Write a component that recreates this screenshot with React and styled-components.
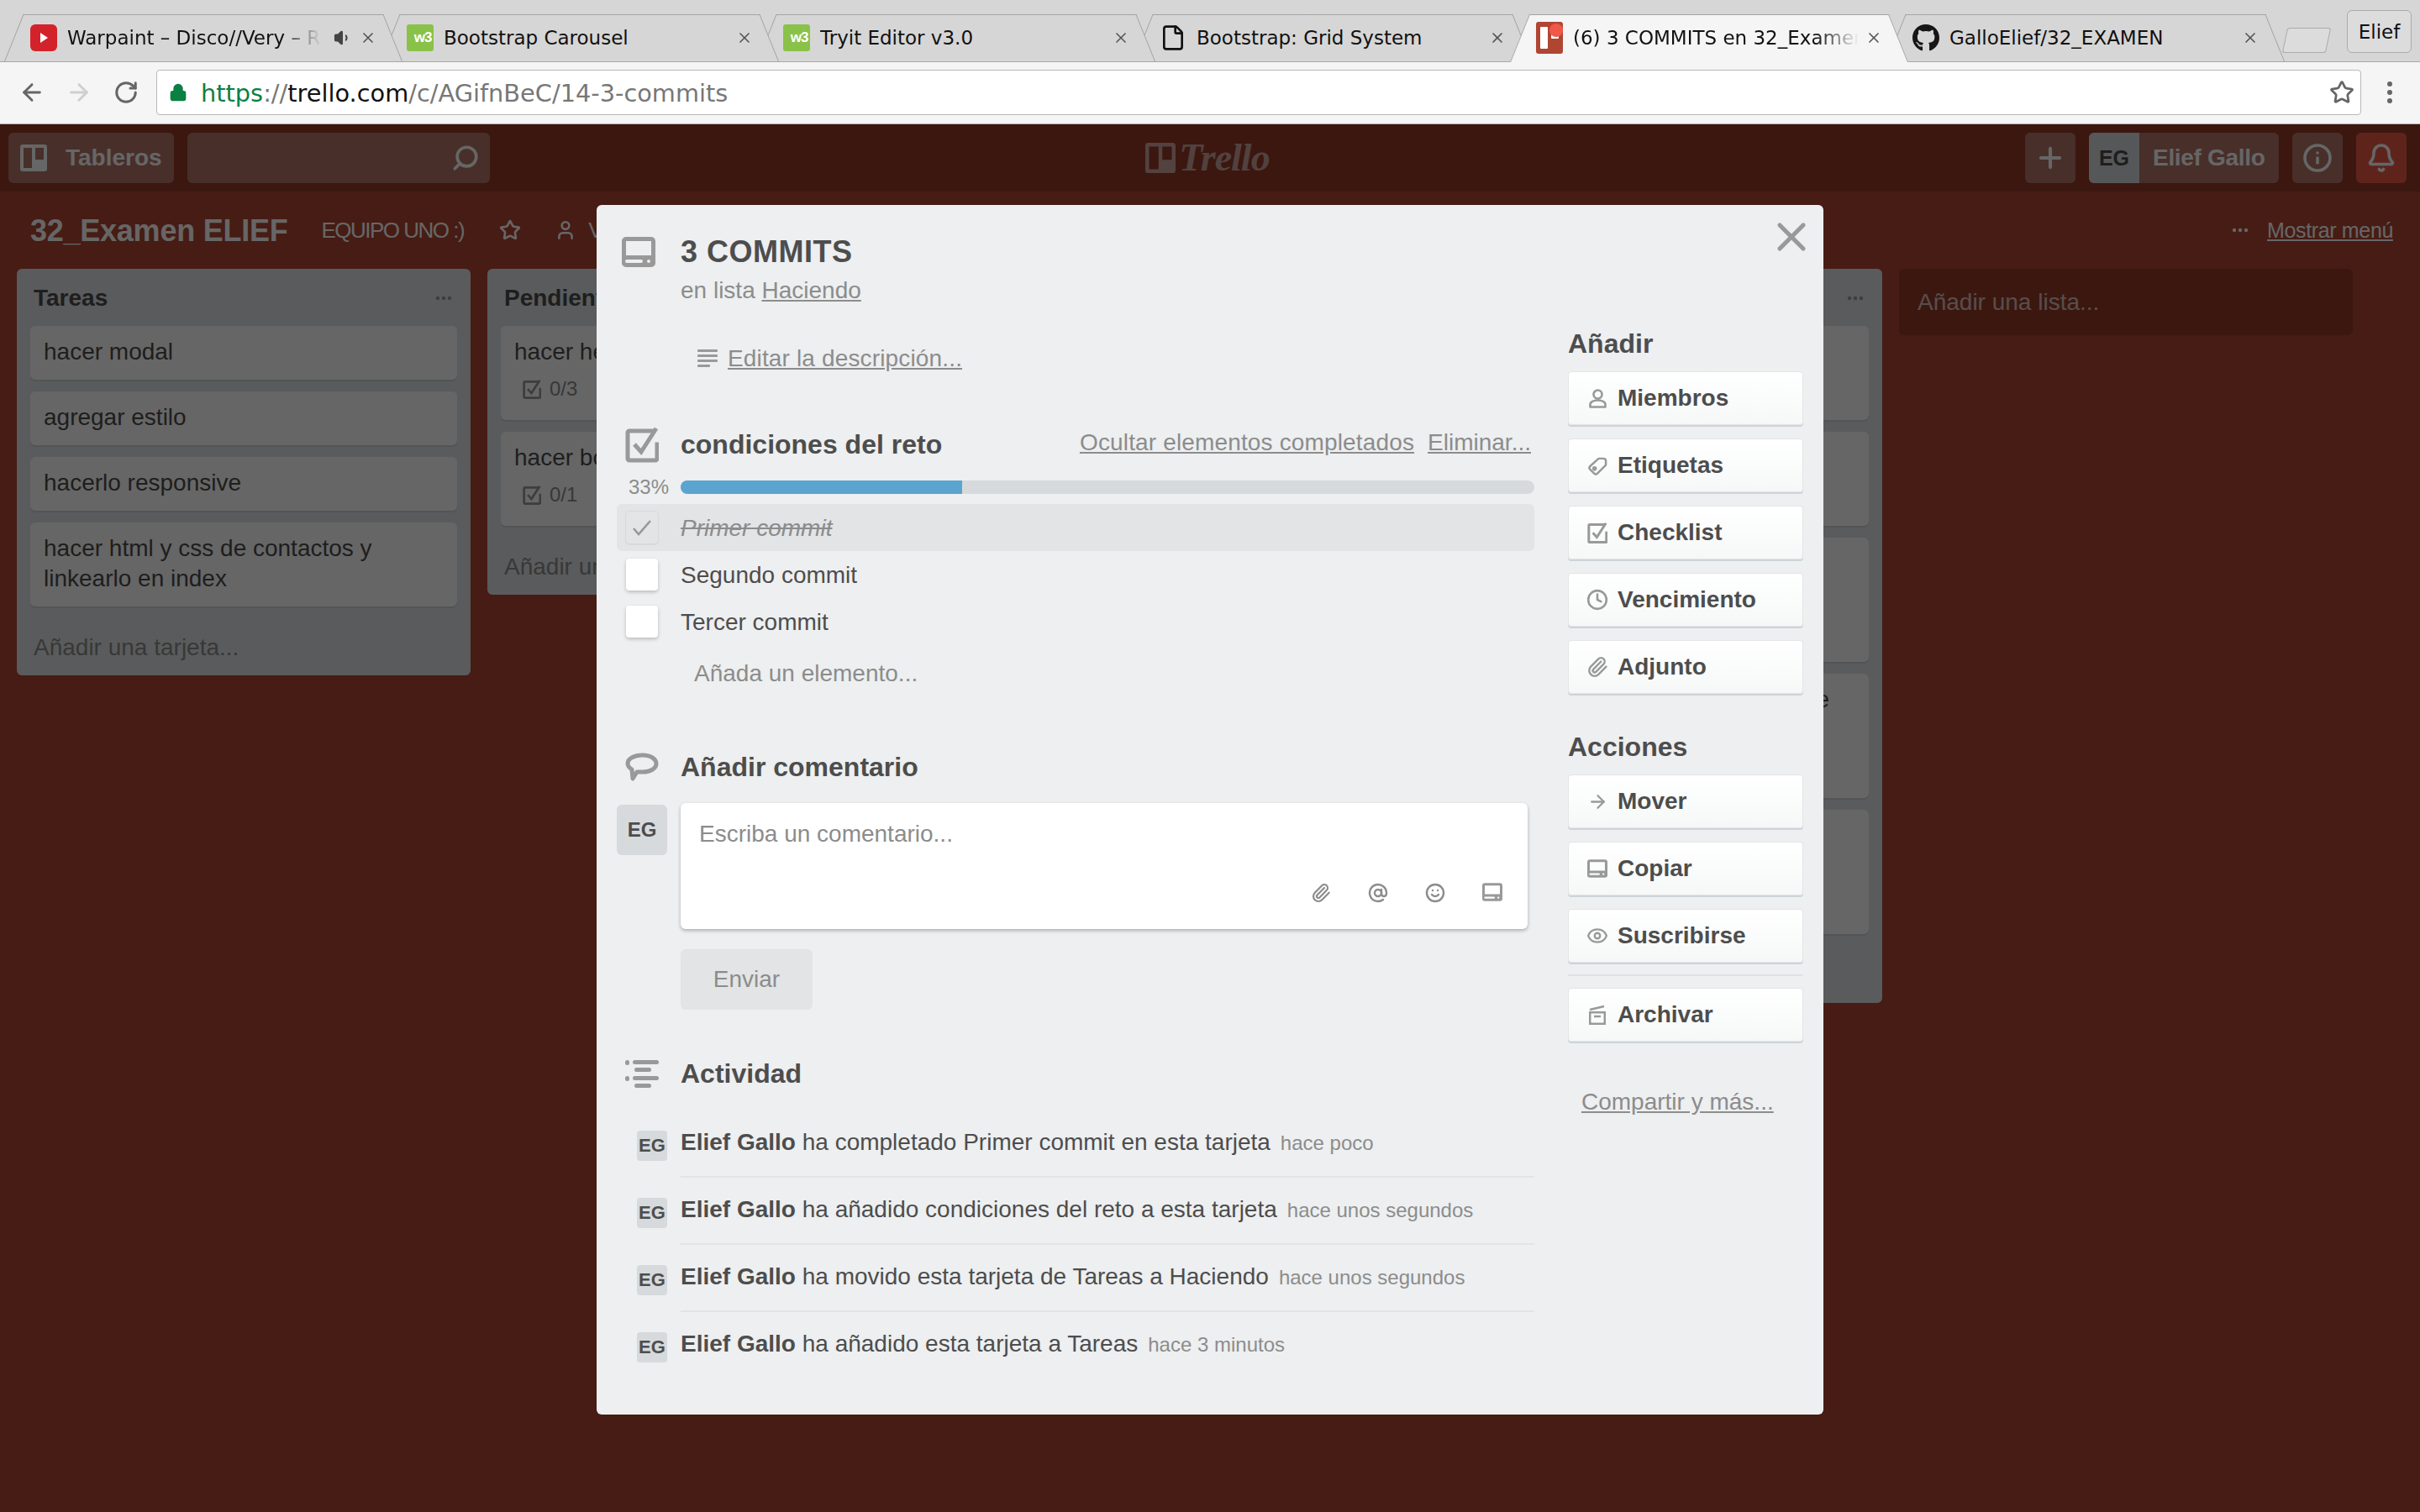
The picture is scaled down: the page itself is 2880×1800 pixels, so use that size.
import React from "react";
import styled, { createGlobalStyle } from "styled-components";
import { ArrowLeft, ArrowRight, RotateCw, Lock, Star, Plus, Info, Bell, Search, Paperclip, AtSign, Smile, Clock, Eye, File, Volume1, MoreHorizontal, X, User } from "lucide-react";
import { FaGithub } from "react-icons/fa";

const Global = createGlobalStyle`
  html, body { margin: 0; padding: 0; width: 2880px; height: 1800px; overflow: hidden; background: #471b14; }
  * { box-sizing: border-box; }
  body { font-family: "Liberation Sans", Arial, sans-serif; }
`;

const Page = styled.div`
  width: 2880px;
  height: 1800px;
  display: flex;
  flex-direction: column;
`;

/* ---------- browser chrome ---------- */
const TabStrip = styled.div`
  position: relative;
  height: 74px;
  flex: none;
  padding: 17px 0 0 31px;
  display: flex;
  align-items: flex-start;
  background: #d6d6d6;
  box-shadow: inset 0 -1px 0 #a8a8a8;
  font-family: "DejaVu Sans", sans-serif;
`;
const Tab = styled.div`
  position: relative;
  flex: none;
  width: 474px;
  height: ${(p) => (p.$active ? 57 : 56)}px;
  margin-left: -26px;
  display: flex;
  align-items: center;
  padding: 0 0 1px 31px;
  z-index: ${(p) => p.$z};
  &::before, &::after {
    content: "";
    position: absolute;
    top: 0;
    bottom: 0;
    width: 50%;
    background: ${(p) => (p.$active ? "#f5f5f5" : "#d6d6d6")};
    border-top: 1px solid #a3a3a3;
    z-index: -1;
  }
  &::before {
    left: 0;
    border-left: 1px solid #a3a3a3;
    transform-origin: bottom left;
    transform: skewX(-22deg);
  }
  &::after {
    right: 0;
    border-right: 1px solid #a3a3a3;
    transform-origin: bottom right;
    transform: skewX(22deg);
  }
`;
const Favicon = styled.span`
  flex: none;
  width: 32px;
  height: 32px;
  display: flex;
  align-items: center;
  justify-content: center;
`;
const TabTitle = styled.span`
  flex: none;
  width: ${(p) => p.$w}px;
  margin-left: 12px;
  font-size: 23px;
  color: #111;
  white-space: nowrap;
  overflow: hidden;
  ${(p) => p.$fade && "mask-image: linear-gradient(to right, #000 85%, transparent 100%);"}
`;
const TabClose = styled.span`
  position: absolute;
  left: 423px;
  top: 16px;
  width: 20px;
  height: 24px;
  display: flex;
  align-items: center;
  justify-content: center;
  color: #555;
`;
const Speaker = styled.span`
  position: absolute;
  left: 392px;
  top: 17px;
  display: flex;
  color: #444;
`;
const NewTab = styled.span`
  position: relative;
  flex: none;
  width: 52px;
  height: 30px;
  margin: 16px 0 0 0;
  background: #dcdcdc;
  border: 1px solid #ababab;
  border-radius: 3px;
  transform: skewX(-12deg);
`;
const ProfileButton = styled.span`
  position: absolute;
  right: 10px;
  top: 12px;
  width: 77px;
  height: 51px;
  display: flex;
  align-items: center;
  justify-content: center;
  background: #dcdcdc;
  border: 1px solid #ababab;
  border-radius: 6px;
  font-size: 23px;
  color: #111;
`;
const Toolbar = styled.div`
  height: 74px;
  flex: none;
  display: flex;
  align-items: center;
  padding: 0 0 2px 18px;
  background: #f5f5f5;
  border-bottom: 1px solid #b4b4b4;
`;
const NavButton = styled.span`
  flex: none;
  width: 40px;
  margin-right: ${(p) => p.$gap}px;
  display: flex;
  justify-content: center;
  color: ${(p) => (p.$off ? "#cfcfcf" : "#666")};
`;
const AddressBar = styled.div`
  flex: none;
  width: 2624px;
  height: 54px;
  display: flex;
  align-items: center;
  padding: 0 7px 0 14px;
  background: #fff;
  border: 1px solid #b9b9b9;
  border-radius: 4px;
  font-family: "DejaVu Sans", sans-serif;
  font-size: 28.8px;
  color: #777;
`;
const UrlText = styled.span`
  margin-left: 16px;
  padding-top: 2px;
  flex: 1;
  white-space: nowrap;
`;
const UrlGreen = styled.span` color: #0b8043; `;
const UrlDark = styled.span` color: #111; `;
const MenuDots = styled.span`
  flex: none;
  width: 6px;
  margin-left: 31px;
  display: flex;
  flex-direction: column;
  gap: 4px;
  & > i { display: block; width: 6px; height: 6px; border-radius: 50%; background: #666; }
`;

/* ---------- trello page ---------- */
const Viewport = styled.div`
  position: relative;
  flex: 1;
  background: #b04632;
  overflow: hidden;
`;
const HeaderBar = styled.header`
  height: 80px;
  display: grid;
  grid-template-columns: 1fr auto 1fr;
  align-items: center;
  padding: 0 16px 0 10px;
  background: rgba(0, 0, 0, 0.15);
`;
const HeaderSide = styled.div`
  display: flex;
  align-items: center;
  gap: 16px;
  justify-content: ${(p) => (p.$end ? "flex-end" : "flex-start")};
`;
const HeaderButton = styled.div`
  height: 60px;
  width: ${(p) => (p.$w ? p.$w + "px" : "auto")};
  display: flex;
  align-items: center;
  justify-content: ${(p) => p.$justify || "center"};
  gap: 22px;
  padding: ${(p) => p.$pad || "0"};
  border-radius: 6px;
  overflow: hidden;
  color: #fff;
  font-weight: 700;
  font-size: 28px;
  background: ${(p) => p.$bg || "rgba(255,255,255,.3)"};
`;
const HeaderAvatar = styled.span`
  flex: none;
  width: 60px;
  height: 60px;
  display: flex;
  align-items: center;
  justify-content: center;
  background: #d6dadc;
  color: #4d4d4d;
  font-size: 25px;
`;
const UserName = styled.span`
  margin-left: -6px;
  white-space: nowrap;
  letter-spacing: -0.3px;
`;
const Logo = styled.div`
  display: flex;
  align-items: center;
  gap: 4px;
  color: rgba(255, 255, 255, 0.55);
  font-family: "Liberation Serif", serif;
  font-style: italic;
  font-weight: 700;
  font-size: 46px;
  line-height: 1;
  letter-spacing: -1px;
`;
const BoardBar = styled.div`
  height: 92px;
  display: flex;
  align-items: center;
  padding: 0 32px 0 36px;
  color: #fff;
`;
const BoardTitle = styled.h1`
  margin: 0;
  padding-top: 2px;
  font-size: 36px;
  font-weight: 700;
  line-height: 44px;
  letter-spacing: -0.25px;
`;
const TeamName = styled.span`
  margin-left: 40px;
  font-size: 26px;
  letter-spacing: -1.5px;
  white-space: nowrap;
`;
const BoardIcon = styled.span`
  display: flex;
  margin-left: ${(p) => p.$m}px;
`;
const BoardVisibility = styled.span`
  margin-left: 14px;
  font-size: 26px;
  white-space: nowrap;
`;
const BoardMenu = styled.div`
  margin-left: auto;
  display: flex;
  align-items: center;
  gap: 20px;
  font-size: 25px;
  letter-spacing: -0.35px;
`;
const Under = styled.span`
  text-decoration: underline;
  letter-spacing: ${(p) => p.$spacing || "inherit"};
`;
const Lists = styled.div`
  display: flex;
  align-items: flex-start;
  gap: 20px;
  padding-left: 20px;
`;
const List = styled.section`
  flex: none;
  width: 540px;
  border-radius: 6px;
  background: #e2e4e6;
  padding: 0 16px;
  color: #4d4d4d;
`;
const ListHead = styled.div`
  height: 68px;
  display: flex;
  align-items: center;
  justify-content: space-between;
  padding: 2px 4px 0;
  font-size: 28px;
  font-weight: 700;
  white-space: nowrap;
  overflow: hidden;
  color: #4d4d4d;
`;
const ListDots = styled.span` display: flex; color: #999; `;
const Cards = styled.div`
  display: flex;
  flex-direction: column;
  gap: 14px;
`;
const Card = styled.div`
  background: #fff;
  border-radius: 6px;
  padding: 13px 16px 15px;
  font-size: 28px;
  line-height: 36px;
  color: #4d4d4d;
  box-shadow: 0 2px 0 #ccd2d5;
`;
const Badge = styled.div`
  display: flex;
  align-items: center;
  gap: 10px;
  height: 40px;
  margin: 6px 0 2px 10px;
  font-size: 24px;
  color: #8c8c8c;
`;
const AddCard = styled.div`
  height: 68px;
  margin-top: 14px;
  padding: 2px 4px 0;
  display: flex;
  align-items: center;
  white-space: nowrap;
  overflow: hidden;
  font-size: 28px;
  color: #8c8c8c;
`;
const AddList = styled.div`
  flex: none;
  width: 540px;
  height: 79px;
  display: flex;
  align-items: center;
  padding: 1px 0 0 22px;
  border-radius: 6px;
  background: rgba(0, 0, 0, 0.15);
  color: rgba(255, 255, 255, 0.7);
  font-size: 28px;
`;

/* ---------- modal ---------- */
const Overlay = styled.div`
  position: absolute;
  inset: 0;
  display: flex;
  justify-content: center;
  align-items: flex-start;
  padding-top: 96px;
  background: rgba(0, 0, 0, 0.6);
`;
const Modal = styled.div`
  position: relative;
  width: 1460px;
  padding: 0 24px 42px;
  border-radius: 6px;
  background: #edeff0;
  color: #4d4d4d;
  font-size: 28px;
`;
const CloseButton = styled.span`
  position: absolute;
  top: 10px;
  right: 10px;
  display: flex;
  color: #999;
`;
const ModalHead = styled.div`
  display: grid;
  grid-template-columns: 76px 1fr;
  padding-top: 34px;
`;
const Gutter = styled.span`
  display: flex;
  justify-content: ${(p) => p.$justify || "flex-start"};
  align-items: center;
  padding-left: ${(p) => p.$pad ?? 10}px;
`;
const ModalTitle = styled.h2`
  margin: 0;
  font-size: 36px;
  line-height: 44px;
  font-weight: 700;
  letter-spacing: 0.5px;
  color: #4d4d4d;
`;
const Subtitle = styled.div`
  grid-column: 2;
  margin-top: 6px;
  line-height: 36px;
  color: #8c8c8c;
`;
const Columns = styled.div`
  display: grid;
  grid-template-columns: 1092px 280px;
  column-gap: 40px;
  margin-top: 20px;
`;
const Main = styled.div`
  display: flex;
  flex-direction: column;
  min-width: 0;
`;
const DescLink = styled.div`
  margin: 25px 0 0 96px;
  display: flex;
  align-items: center;
  gap: 12px;
  line-height: 36px;
  letter-spacing: 0.15px;
  color: #8c8c8c;
`;
const SectionHead = styled.div`
  display: grid;
  grid-template-columns: 76px 1fr auto;
  align-items: center;
  height: 44px;
  margin-top: ${(p) => p.$top}px;
`;
const SectionTitle = styled.h3`
  margin: 0;
  font-size: 32px;
  line-height: 44px;
  font-weight: 700;
  color: #4d4d4d;
`;
const SectionLinks = styled.div`
  display: flex;
  gap: 16px;
  padding: 0 4px 4px 0;
  color: #8c8c8c;
`;
const ProgressRow = styled.div`
  display: flex;
  align-items: center;
  height: 16px;
  margin-top: 21px;
`;
const Percent = styled.span`
  flex: none;
  width: 76px;
  text-align: center;
  font-size: 24px;
  color: #8c8c8c;
`;
const Track = styled.div`
  flex: 1;
  height: 16px;
  border-radius: 8px;
  overflow: hidden;
  background: #d6dadc;
`;
const Fill = styled.div`
  height: 100%;
  background: #5ba4cf;
`;
const CheckRows = styled.div`
  margin-top: 12px;
`;
const CheckRow = styled.div`
  height: 56px;
  display: flex;
  align-items: center;
  padding-left: 11px;
  gap: 27px;
  border-radius: 6px;
  background: ${(p) => (p.$done ? "#e2e4e6" : "transparent")};
`;
const CheckBox = styled.span`
  flex: none;
  width: 38px;
  height: 38px;
  display: flex;
  align-items: center;
  justify-content: center;
  border-radius: 4px;
  color: #999;
  background: ${(p) => (p.$done ? "transparent" : "#fff")};
  box-shadow: ${(p) => (p.$done ? "0 0 0 1px #d6dadc, 0 1px 0 1px #d6dadc" : "0 2px 4px rgba(0,0,0,.22)")};
`;
const CheckLabel = styled.span`
  padding-top: 1px;
  color: ${(p) => (p.$done ? "#8c8c8c" : "#4d4d4d")};
  font-style: ${(p) => (p.$done ? "italic" : "normal")};
  text-decoration: ${(p) => (p.$done ? "line-through" : "none")};
`;
const AddItem = styled.div`
  margin: 16px 0 0 92px;
  line-height: 36px;
  color: #8c8c8c;
`;
const CommentRow = styled.div`
  display: flex;
  gap: 16px;
  margin-top: 21px;
`;
const Avatar = styled.span`
  flex: none;
  width: 60px;
  height: 60px;
  margin-top: 2px;
  display: flex;
  align-items: center;
  justify-content: center;
  border-radius: 6px;
  background: #d6dadc;
  font-weight: 700;
  font-size: 24px;
  color: #4d4d4d;
`;
const CommentBox = styled.div`
  width: 1008px;
  height: 150px;
  display: flex;
  flex-direction: column;
  justify-content: space-between;
  padding: 21px 30px 31px 22px;
  border-radius: 6px;
  background: #fff;
  box-shadow: 0 2px 4px rgba(0, 0, 0, 0.28);
  color: #8c8c8c;
`;
const CommentTools = styled.div`
  display: flex;
  justify-content: flex-end;
  gap: 44px;
  color: #8c8c8c;
`;
const SendButton = styled.div`
  width: 157px;
  height: 72px;
  margin: 24px 0 0 76px;
  display: flex;
  align-items: center;
  justify-content: center;
  border-radius: 6px;
  background: #e2e4e6;
  color: #8c8c8c;
`;
const Activity = styled.div`
  margin-top: 22px;
`;
const ActivityRow = styled.div`
  display: flex;
  padding-left: 24px;
  gap: 16px;
`;
const MiniAvatar = styled.span`
  flex: none;
  width: 36px;
  height: 36px;
  margin-top: 24px;
  display: flex;
  align-items: center;
  justify-content: center;
  border-radius: 4px;
  background: #d6dadc;
  font-weight: 700;
  font-size: 22px;
  color: #4d4d4d;
`;
const ActivityBody = styled.div`
  flex: 1;
  height: 80px;
  padding-top: 20px;
  line-height: 36px;
  white-space: nowrap;
  border-bottom: ${(p) => (p.$last ? "none" : "2px solid #e2e4e6")};
`;
const ActivityTime = styled.span`
  margin-left: 12px;
  font-size: 24px;
  color: #8c8c8c;
`;
const Side = styled.aside`
  display: flex;
  flex-direction: column;
`;
const SideTitle = styled.h3`
  margin: ${(p) => p.$top || 0}px 0 9px;
  padding-top: 1px;
  font-size: 32px;
  line-height: 48px;
  font-weight: 700;
  color: #4d4d4d;
`;
const SideButtons = styled.div`
  display: flex;
  flex-direction: column;
  gap: 16px;
`;
const SideButton = styled.div`
  height: 64px;
  display: flex;
  align-items: center;
  padding-left: 20px;
  gap: 10px;
  border: 1px solid #e3e5e6;
  border-radius: 4px;
  background: linear-gradient(to bottom, #fff, #f6f8f8);
  box-shadow: 0 2px 0 #cdd4d8;
  font-weight: 700;
  color: #4d4d4d;
`;
const SideIcon = styled.span`
  flex: none;
  width: 28px;
  display: flex;
  justify-content: center;
  color: #999;
`;
const SideDivider = styled.hr`
  width: 100%;
  height: 2px;
  margin: 14px 0;
  border: 0;
  background: #dfe2e4;
`;
const ShareLink = styled.div`
  margin: 54px 0 0 16px;
  line-height: 36px;
  color: #8c8c8c;
`;

/* ---------- drawn icons ---------- */
const CardIcon = ({ w = 40, h = 36 }) => (
  <svg width={w} height={h} viewBox="0 0 40 36" fill="#999">
    <path fillRule="evenodd" d="M5 0h30a5 5 0 0 1 5 5v26a5 5 0 0 1-5 5H5a5 5 0 0 1-5-5V5a5 5 0 0 1 5-5Zm0 5v17h30V5H5Zm1 22a2 2 0 0 0 0 4h17a2 2 0 0 0 0-4H6Zm26 0a2 2 0 1 0 0 4 2 2 0 0 0 0-4Z" />
  </svg>
);
const CheckIcon = ({ s = 40 }) => (
  <svg width={s} height={s * 1.1} viewBox="0 0 40 44" fill="none" stroke="#999" strokeWidth="5">
    <path d="M32 6H5a2 2 0 0 0-2 2v31a2 2 0 0 0 2 2h31a2 2 0 0 0 2-2V22" strokeLinecap="square" />
    <path d="M11 22l8 9L37 3" strokeWidth="5" />
  </svg>
);
const LinesIcon = () => (
  <svg width="24" height="22" viewBox="0 0 24 22" fill="#999">
    <rect width="24" height="3" y="0" rx="1" />
    <rect width="24" height="3" y="6" rx="1" />
    <rect width="24" height="3" y="12" rx="1" />
    <rect width="15" height="3" y="18" rx="1" />
  </svg>
);
const BubbleIcon = () => (
  <svg width="40" height="34" viewBox="0 0 40 34" fill="none" stroke="#999" strokeWidth="5" strokeLinejoin="round">
    <path d="M21 3C31 3 37 8 37 13C37 19 30 23 21 23H14L9 31L8 20C5 18 3 16 3 13C3 7 11 3 21 3Z" />
  </svg>
);
const ActivityIcon = () => (
  <svg width="40" height="33" viewBox="0 0 40 33" fill="#999">
    <rect x="0" y="0" width="5" height="6" rx="2.5" />
    <rect x="9" y="0" width="31" height="5" rx="2.5" />
    <rect x="11" y="9" width="20" height="5" rx="2.5" />
    <rect x="0" y="19" width="5" height="6" rx="2.5" />
    <rect x="9" y="19" width="31" height="5" rx="2.5" />
    <rect x="11" y="28" width="20" height="5" rx="2.5" />
  </svg>
);
const PersonIcon = () => (
  <svg width="21" height="23" viewBox="0 0 21 23" fill="none" stroke="#999" strokeWidth="2.6" strokeLinejoin="round">
    <circle cx="10.5" cy="6.5" r="5" />
    <path d="M1.5 21.5v-3c0-3 4-5 9-5s9 2 9 5v3Z" />
  </svg>
);
const TagIcon = () => (
  <svg width="23" height="23" viewBox="0 0 24 24" fill="none" stroke="#999" strokeWidth="2.6" strokeLinejoin="round">
    <path d="M13 3h6q3 0 3 3v5L11.5 21.5q-2 2-4 0l-5-5q-2-2 0-4Z" />
    <circle cx="8" cy="15.5" r="1.6" fill="#999" />
  </svg>
);
const ClipIcon = ({ s = 26 }) => <Paperclip size={s} strokeWidth={2.2} />;
const ArchiveIcon = () => (
  <svg width="20" height="24" viewBox="0 0 20 24" fill="none" stroke="#999" strokeWidth="2.5">
    <path d="M1 6l17-4" />
    <rect x="1.2" y="9.2" width="17.6" height="13.6" />
    <path d="M6 14h8" />
  </svg>
);
const BoardsIcon = ({ s = 32, fill = "#fff" }) => (
  <svg width={s} height={s} viewBox="0 0 32 32" fill={fill}>
    <path fillRule="evenodd" d="M3 0h26a3 3 0 0 1 3 3v26a3 3 0 0 1-3 3H3a3 3 0 0 1-3-3V3a3 3 0 0 1 3-3Zm1 4v24h10V4H4Zm14 0v14h10V4H18Z" />
  </svg>
);
const YoutubeIcon = () => (
  <svg width="32" height="32" viewBox="0 0 32 32">
    <rect width="32" height="32" y="0" rx="6" fill="#d4222a" />
    <path d="M12 10l9 6-9 6Z" fill="#fff" />
  </svg>
);
const W3Badge = styled.span`
  width: 32px;
  height: 32px;
  display: flex;
  align-items: center;
  justify-content: center;
  padding-left: 6px;
  border-radius: 3px;
  background: #8ac249;
  color: #fff;
  font-family: "Liberation Sans", sans-serif;
  font-weight: 700;
  font-size: 17px;
  letter-spacing: -1px;
`;
const TrelloFav = () => (
  <svg width="32" height="38" viewBox="0 0 32 38">
    <rect width="32" height="38" rx="3" fill="#b04632" />
    <rect x="5" y="6" width="9" height="26" rx="1" fill="#fff" />
    <rect x="18" y="6" width="9" height="14" rx="1" fill="#fff" />
    <circle cx="24" cy="10" r="8" fill="#f0584a" />
  </svg>
);

const tabs = [
  { title: "Warpaint – Disco//Very – Rem", icon: <YoutubeIcon />, w: 302, fade: true, sound: true },
  { title: "Bootstrap Carousel", icon: <W3Badge>w3</W3Badge>, w: 340 },
  { title: "Tryit Editor v3.0", icon: <W3Badge>w3</W3Badge>, w: 340 },
  { title: "Bootstrap: Grid System", icon: <File size={34} color="#111" strokeWidth={2} />, w: 340 },
  { title: "(6) 3 COMMITS en 32_Examen ELIEF", icon: <TrelloFav />, w: 340, fade: true, active: true },
  { title: "GalloElief/32_EXAMEN", icon: <FaGithub size={34} color="#161616" />, w: 340 },
];

const Fake = ({ text, badge }) => (
  <Card>
    {text}
    {badge && (
      <Badge>
        <CheckIcon s={22} />
        {badge}
      </Badge>
    )}
  </Card>
);

const lists = [
  {
    title: "Tareas",
    cards: [{ text: "hacer modal" }, { text: "agregar estilo" }, { text: "hacerlo responsive" }, { text: "hacer html y css de contactos y linkearlo en index" }],
  },
  {
    title: "Pendiente",
    cards: [{ text: "hacer header", badge: "0/3" }, { text: "hacer body", badge: "0/1" }],
  },
  {
    title: "Haciendo",
    cards: [{ text: "3 COMMITS", badge: "1/3" }],
  },
  {
    title: "Hecho",
    cards: [
      { text: "crear repo", badge: "1/1" },
      { text: "crear tablero", badge: "1/1" },
      { text: "hacer el index con secciones y con enlaces", badge: "2/2" },
      { text: "hacer la barra de navegación fija de contactos", badge: "3/3" },
      { text: "subir los archivos base a GalloElief/32_EXAMEN", badge: "1/1" },
    ],
  },
];

const items = [
  { label: "Primer commit", done: true },
  { label: "Segundo commit" },
  { label: "Tercer commit" },
];

const activity = [
  { text: "ha completado Primer commit en esta tarjeta", time: "hace poco" },
  { text: "ha añadido condiciones del reto a esta tarjeta", time: "hace unos segundos" },
  { text: "ha movido esta tarjeta de Tareas a Haciendo", time: "hace unos segundos" },
  { text: "ha añadido esta tarjeta a Tareas", time: "hace 3 minutos" },
];

const addButtons = [
  { label: "Miembros", icon: <PersonIcon /> },
  { label: "Etiquetas", icon: <TagIcon /> },
  { label: "Checklist", icon: <CheckIcon s={24} /> },
  { label: "Vencimiento", icon: <Clock size={26} strokeWidth={2.4} /> },
  { label: "Adjunto", icon: <ClipIcon /> },
];
const actionButtons = [
  { label: "Mover", icon: <ArrowRight size={25} strokeWidth={2.2} /> },
  { label: "Copiar", icon: <CardIcon w={24} h={22} /> },
  { label: "Suscribirse", icon: <Eye size={26} strokeWidth={2.2} /> },
];

export default function App() {
  return (
    <Page>
      <Global />
      <TabStrip>
        {tabs.map((t, i) => (
          <Tab key={t.title} $active={t.active} $z={t.active ? 20 : 10 - i}>
            <Favicon>{t.icon}</Favicon>
            <TabTitle $w={t.w} $fade={t.fade}>{t.title}</TabTitle>
            {t.sound && (
              <Speaker>
                <Volume1 size={22} fill="#444" strokeWidth={2} />
              </Speaker>
            )}
            <TabClose>
              <X size={20} strokeWidth={2} />
            </TabClose>
          </Tab>
        ))}
        <NewTab />
        <ProfileButton>Elief</ProfileButton>
      </TabStrip>
      <Toolbar>
        <NavButton $gap={16}>
          <ArrowLeft size={32} strokeWidth={2.2} />
        </NavButton>
        <NavButton $gap={16} $off>
          <ArrowRight size={32} strokeWidth={2.2} />
        </NavButton>
        <NavButton $gap={16}>
          <RotateCw size={30} strokeWidth={2.4} />
        </NavButton>
        <AddressBar>
          <Lock size={22} color="#0b8043" fill="#0b8043" strokeWidth={2.4} />
          <UrlText>
            <UrlGreen>https</UrlGreen>://<UrlDark>trello.com</UrlDark>/c/AGifnBeC/14-3-commits
          </UrlText>
          <Star size={30} color="#666" strokeWidth={2.2} />
        </AddressBar>
        <MenuDots>
          <i />
          <i />
          <i />
        </MenuDots>
      </Toolbar>
      <Viewport>
        <HeaderBar>
          <HeaderSide>
            <HeaderButton $w={197} $justify="flex-start" $pad="0 0 0 14px">
              <BoardsIcon />
              Tableros
            </HeaderButton>
            <HeaderButton $w={360} $justify="flex-end" $pad="0 12px 0 0">
              <Search size={34} strokeWidth={2.6} style={{ transform: "scaleX(-1)" }} />
            </HeaderButton>
          </HeaderSide>
          <Logo>
            <BoardsIcon s={36} fill="rgba(255,255,255,.55)" />
            Trello
          </Logo>
          <HeaderSide $end>
            <HeaderButton $w={60}>
              <Plus size={38} strokeWidth={2.6} />
            </HeaderButton>
            <HeaderButton $w={226} $justify="flex-start">
              <HeaderAvatar>EG</HeaderAvatar>
              <UserName>Elief Gallo</UserName>
            </HeaderButton>
            <HeaderButton $w={60}>
              <Info size={36} strokeWidth={2.4} />
            </HeaderButton>
            <HeaderButton $w={60} $bg="#eb5a46">
              <Bell size={36} strokeWidth={2.4} />
            </HeaderButton>
          </HeaderSide>
        </HeaderBar>
        <BoardBar>
          <BoardTitle>32_Examen ELIEF</BoardTitle>
          <TeamName>EQUIPO UNO :)</TeamName>
          <BoardIcon $m={42}>
            <Star size={26} strokeWidth={2.4} />
          </BoardIcon>
          <BoardIcon $m={40}>
            <User size={26} strokeWidth={2.4} />
          </BoardIcon>
          <BoardVisibility>Visible para el equipo</BoardVisibility>
          <BoardMenu>
            <MoreHorizontal size={24} strokeWidth={2.4} />
            <Under>Mostrar menú</Under>
          </BoardMenu>
        </BoardBar>
        <Lists>
          {lists.map((l) => (
            <List key={l.title}>
              <ListHead>
                {l.title}
                <ListDots>
                  <MoreHorizontal size={24} strokeWidth={2.4} />
                </ListDots>
              </ListHead>
              <Cards>
                {l.cards.map((c) => (
                  <Fake key={c.text} text={c.text} badge={c.badge} />
                ))}
              </Cards>
              <AddCard>Añadir una tarjeta...</AddCard>
            </List>
          ))}
          <AddList>Añadir una lista...</AddList>
        </Lists>

        <Overlay>
          <Modal>
            <CloseButton>
              <X size={56} strokeWidth={2.2} />
            </CloseButton>
            <ModalHead>
              <Gutter $pad={6}>
                <CardIcon />
              </Gutter>
              <ModalTitle>3 COMMITS</ModalTitle>
              <Subtitle>
                en lista <Under>Haciendo</Under>
              </Subtitle>
            </ModalHead>
            <Columns>
              <Main>
                <DescLink>
                  <LinesIcon />
                  <Under>Editar la descripción...</Under>
                </DescLink>

                <SectionHead $top={62}>
                  <Gutter>
                    <CheckIcon />
                  </Gutter>
                  <SectionTitle>condiciones del reto</SectionTitle>
                  <SectionLinks>
                    <Under $spacing="0.15px">Ocultar elementos completados</Under>
                    <Under>Eliminar...</Under>
                  </SectionLinks>
                </SectionHead>
                <ProgressRow>
                  <Percent>33%</Percent>
                  <Track>
                    <Fill style={{ width: "33%" }} />
                  </Track>
                </ProgressRow>
                <CheckRows>
                  {items.map((it) => (
                    <CheckRow key={it.label} $done={it.done}>
                      <CheckBox $done={it.done}>
                        {it.done && (
                          <svg width="24" height="20" viewBox="0 0 24 20" fill="none" stroke="#999" strokeWidth="2.6">
                            <path d="M2 11l6 7L22 2" />
                          </svg>
                        )}
                      </CheckBox>
                      <CheckLabel $done={it.done}>{it.label}</CheckLabel>
                    </CheckRow>
                  ))}
                </CheckRows>
                <AddItem>Añada un elemento...</AddItem>

                <SectionHead $top={71}>
                  <Gutter>
                    <BubbleIcon />
                  </Gutter>
                  <SectionTitle>Añadir comentario</SectionTitle>
                </SectionHead>
                <CommentRow>
                  <Avatar>EG</Avatar>
                  <CommentBox>
                    Escriba un comentario...
                    <CommentTools>
                      <ClipIcon s={24} />
                      <AtSign size={24} strokeWidth={2.4} />
                      <Smile size={24} strokeWidth={2.4} />
                      <CardIcon w={24} h={22} />
                    </CommentTools>
                  </CommentBox>
                </CommentRow>
                <SendButton>Enviar</SendButton>

                <SectionHead $top={54}>
                  <Gutter>
                    <ActivityIcon />
                  </Gutter>
                  <SectionTitle>Actividad</SectionTitle>
                </SectionHead>
                <Activity>
                  {activity.map((a, i) => (
                    <ActivityRow key={a.text}>
                      <MiniAvatar>EG</MiniAvatar>
                      <ActivityBody $last={i === activity.length - 1}>
                        <b>Elief Gallo</b> {a.text}
                        <ActivityTime>{a.time}</ActivityTime>
                      </ActivityBody>
                    </ActivityRow>
                  ))}
                </Activity>
              </Main>
              <Side>
                <SideTitle>Añadir</SideTitle>
                <SideButtons>
                  {addButtons.map((b) => (
                    <SideButton key={b.label}>
                      <SideIcon>{b.icon}</SideIcon>
                      {b.label}
                    </SideButton>
                  ))}
                </SideButtons>
                <SideTitle $top={38}>Acciones</SideTitle>
                <SideButtons>
                  {actionButtons.map((b) => (
                    <SideButton key={b.label}>
                      <SideIcon>{b.icon}</SideIcon>
                      {b.label}
                    </SideButton>
                  ))}
                </SideButtons>
                <SideDivider />
                <SideButton>
                  <SideIcon>
                    <ArchiveIcon />
                  </SideIcon>
                  Archivar
                </SideButton>
                <ShareLink>
                  <Under>Compartir y más...</Under>
                </ShareLink>
              </Side>
            </Columns>
          </Modal>
        </Overlay>
      </Viewport>
    </Page>
  );
}
